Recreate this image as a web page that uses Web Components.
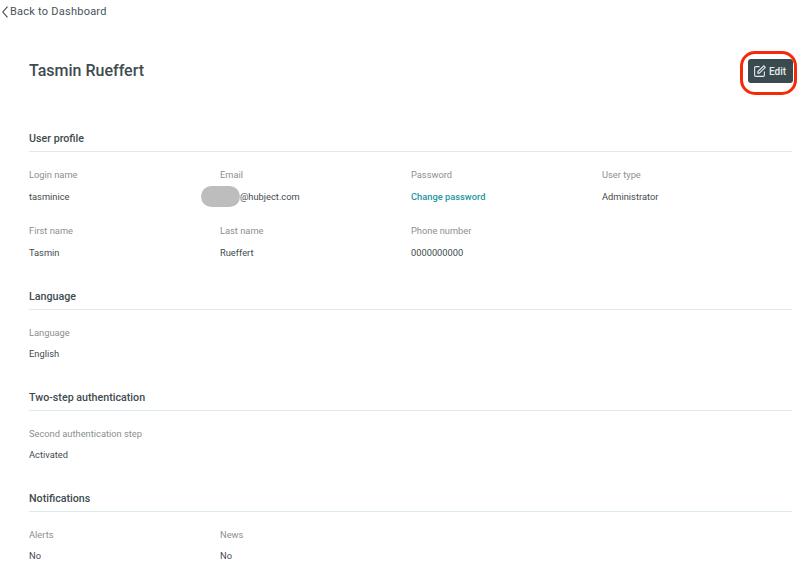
<!DOCTYPE html>
<html>
<head>
<meta charset="utf-8">
<style>
  html, body { margin: 0; background: #fff; }
  body { font-family: Roboto, "Liberation Sans", sans-serif; color: #3f4b4f; }
</style>
</head>
<body>
<profile-page>
  <back-link slot="back">Back to Dashboard</back-link>
  <page-header slot="header" name="Tasmin Rueffert"></page-header>

  <profile-section title="User profile" roomy>
    <profile-field label="Login name">tasminice</profile-field>
    <profile-field label="Email" blurred>@hubject.com</profile-field>
    <profile-field label="Password" link>Change password</profile-field>
    <profile-field label="User type">Administrator</profile-field>
    <profile-field label="First name">Tasmin</profile-field>
    <profile-field label="Last name">Rueffert</profile-field>
    <profile-field label="Phone number">0000000000</profile-field>
  </profile-section>

  <profile-section title="Language">
    <profile-field label="Language">English</profile-field>
  </profile-section>

  <profile-section title="Two-step authentication">
    <profile-field label="Second authentication step" wide>Activated</profile-field>
  </profile-section>

  <profile-section title="Notifications">
    <profile-field label="Alerts">No</profile-field>
    <profile-field label="News">No</profile-field>
  </profile-section>
</profile-page>

<script>
class ProfilePage extends HTMLElement {
  constructor(){
    super();
    this.attachShadow({ mode: 'open' });
    this.shadowRoot.innerHTML = `
      <style>
        :host { display: block; height: 584px; overflow: hidden; }
        .content { padding: 0 8px 0 29px; }
      </style>
      <slot name="back"></slot>
      <div class="content">
        <slot name="header"></slot>
        <slot></slot>
      </div>`;
  }
}

class BackLink extends HTMLElement {
  constructor(){
    super();
    this.attachShadow({ mode: 'open' });
    this.shadowRoot.innerHTML = `
      <style>
        :host { display: flex; align-items: center; gap: 2px; height: 23px; padding-left: 2px; font-size: 11px; color: #46535a; letter-spacing: .24px; }
        svg { width: 6px; height: 12px; flex: none; }
      </style>
      <svg viewBox="0 0 6 12" fill="none" stroke="#3f4b4f" stroke-width="1.1"><path d="M5.5 .7 .8 6l4.7 5.3"/></svg>
      <slot></slot>`;
  }
}

class PageHeader extends HTMLElement {
  constructor(){
    super();
    this.attachShadow({ mode: 'open' });
    this.shadowRoot.innerHTML = `
      <style>
        :host { display: flex; align-items: center; justify-content: space-between; height: 95px; margin-bottom: 14px; position: relative; }
        h1 { margin: 0; font-size: 16px; line-height: 20px; font-weight: 500; color: #3f4b4f; }
        button { display: flex; align-items: center; gap: 3px; width: 45px; height: 24px; padding: 0 0 0 5px; margin: 1px -1px 0 0; border: 0; border-radius: 3px; background: #3b4a4f; color: #e8ecec; font: 500 10px Roboto, sans-serif; }
        svg { width: 13px; height: 13px; flex: none; }
        .ring { position: absolute; left: 711px; top: 28px; width: 51px; height: 38px; border: 3px solid #f62a08; border-radius: 15px; }
      </style>
      <h1></h1>
      <button>
        <svg viewBox="0 0 12 12" fill="none" stroke="#e8ecec" stroke-width="1"><path d="M6 1.5H2.5a1 1 0 0 0-1 1v7a1 1 0 0 0 1 1h7a1 1 0 0 0 1-1V6"/><path d="M4.5 7.5V6L10 .8l1.3 1.4L5.9 7.5z"/></svg>
        Edit
      </button>
      <span class="ring"></span>`;
    this.shadowRoot.querySelector('h1').textContent = this.getAttribute('name');
  }
}

class ProfileSection extends HTMLElement {
  constructor(){
    super();
    this.attachShadow({ mode: 'open' });
    this.shadowRoot.innerHTML = `
      <style>
        :host { display: block; margin-bottom: 31px; --field-gap: 9px; }
        :host([roomy]) { --field-gap: 10px; }
        h2 { margin: 0 0 17px; padding-bottom: 6px; font-size: 10.7px; line-height: 13px; font-weight: 500; color: #3f4b4f; border-bottom: 1px solid #dcebef; }
        .grid { display: grid; grid-template-columns: repeat(4, 191px); row-gap: 22px; }
      </style>
      <h2></h2>
      <div class="grid"><slot></slot></div>`;
    this.shadowRoot.querySelector('h2').textContent = this.getAttribute('title');
  }
}

class ProfileField extends HTMLElement {
  constructor(){
    super();
    this.attachShadow({ mode: 'open' });
    this.shadowRoot.innerHTML = `
      <style>
        :host { display: flex; flex-direction: column; gap: var(--field-gap); font-size: 9.3px; line-height: 12px; position: relative; white-space: nowrap; }
        .label { color: #8b8f91; }
        .value { color: #3f4b4f; }
        :host([link]) .value { color: #1f95a1; font-weight: 500; }
        .blur { position: absolute; left: -19px; top: 17px; width: 39px; height: 21px; border-radius: 11px; background: #bdbdbd; }
      </style>
      <span class="label"></span>
      <span class="value"><slot></slot></span>`;
    this.shadowRoot.querySelector('.label').textContent = this.getAttribute('label');
    if (this.hasAttribute('blurred')) {
      this.shadowRoot.querySelector('.value').style.paddingLeft = '20px';
      const blob = document.createElement('span');
      blob.className = 'blur';
      this.shadowRoot.appendChild(blob);
    }
  }
}

customElements.define('profile-page', ProfilePage);
customElements.define('back-link', BackLink);
customElements.define('page-header', PageHeader);
customElements.define('profile-section', ProfileSection);
customElements.define('profile-field', ProfileField);
</script>
</body>
</html>
